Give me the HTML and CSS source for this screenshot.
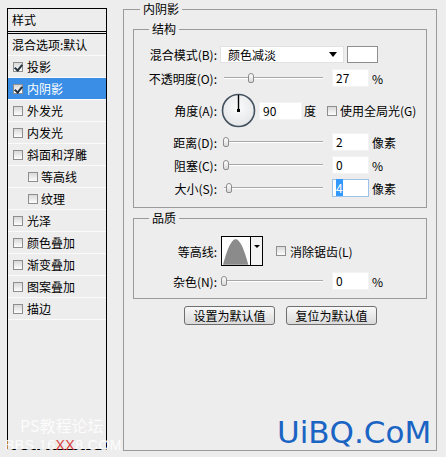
FILE: index.html
```html
<!DOCTYPE html>
<html lang="zh-CN">
<head>
    <meta charset="UTF-8">
    <meta name="viewport" content="width=device-width, initial-scale=1.0">
    <title>图层样式 - 内阴影</title>
    <link rel="stylesheet" href="styles.css">
</head>
<body>
    <div class="dialog">
        <div class="styles-list">
            <div class="list-head">样式</div>
            <div class="list-item plain">混合选项:默认</div>
            <div class="list-item"><span class="check on"></span>投影</div>
            <div class="list-item active"><span class="check on"></span>内阴影</div>
            <div class="list-item"><span class="check"></span>外发光</div>
            <div class="list-item"><span class="check"></span>内发光</div>
            <div class="list-item"><span class="check"></span>斜面和浮雕</div>
            <div class="list-item sub"><span class="check"></span>等高线</div>
            <div class="list-item sub"><span class="check"></span>纹理</div>
            <div class="list-item"><span class="check"></span>光泽</div>
            <div class="list-item"><span class="check"></span>颜色叠加</div>
            <div class="list-item"><span class="check"></span>渐变叠加</div>
            <div class="list-item"><span class="check"></span>图案叠加</div>
            <div class="list-item"><span class="check"></span>描边</div>
        </div>

        <div class="group outer">
            <div class="group-title">内阴影</div>

            <div class="group inner structure">
                <div class="group-title sub-title">结构</div>
                <div class="row row-blend">
                    <span class="label">混合模式(B):</span>
                    <div class="select"><span>颜色减淡</span><span class="arrow"></span></div>
                    <div class="swatch"></div>
                </div>
                <div class="row row-first">
                    <span class="label">不透明度(O):</span>
                    <div class="slider"><span class="thumb" style="left: 24px"></span></div>
                    <div class="field">27</div>
                    <span class="unit">%</span>
                </div>
                <div class="row row-angle">
                    <span class="label">角度(A):</span>
                    <svg class="dial" width="35" height="35" viewBox="0 0 35 35">
                        <defs>
                            <radialGradient id="dialFill" cx="50%" cy="40%" r="60%">
                                <stop offset="0" stop-color="#fbfbfb"/>
                                <stop offset="1" stop-color="#e4e6e8"/>
                            </radialGradient>
                        </defs>
                        <circle cx="17.5" cy="17.5" r="16" fill="url(#dialFill)" stroke="#44515e" stroke-width="1.6"/>
                        <line x1="17.5" y1="17.5" x2="17.5" y2="2" stroke="#000" stroke-width="1.4"/>
                        <rect x="16" y="16" width="3" height="3" fill="#000"/>
                    </svg>
                    <div class="field wide">90</div>
                    <span class="unit">度</span>
                    <span class="check global"></span>
                    <span>使用全局光(G)</span>
                </div>
                <div class="row">
                    <span class="label">距离(D):</span>
                    <div class="slider"><span class="thumb" style="left: -1px"></span></div>
                    <div class="field">2</div>
                    <span class="unit">像素</span>
                </div>
                <div class="row">
                    <span class="label">阻塞(C):</span>
                    <div class="slider"><span class="thumb" style="left: -1px"></span></div>
                    <div class="field">0</div>
                    <span class="unit">%</span>
                </div>
                <div class="row">
                    <span class="label">大小(S):</span>
                    <div class="slider"><span class="thumb" style="left: 2px"></span></div>
                    <div class="field focus"><span class="sel">4</span></div>
                    <span class="unit">像素</span>
                </div>
            </div>

            <div class="group inner quality">
                <div class="group-title sub-title">品质</div>
                <div class="row row-contour">
                    <span class="label">等高线:</span>
                    <div class="contour">
                        <svg width="29" height="28" viewBox="0 0 29 28">
                            <path d="M1 28 C6 10 10 2 14 2 C18 2 22 10 27 28 Z" fill="#8b8b8b"/>
                        </svg>
                        <span class="contour-drop"><span class="arrow small"></span></span>
                    </div>
                    <span class="check smooth"></span>
                    <span>消除锯齿(L)</span>
                </div>
                <div class="row row-noise">
                    <span class="label">杂色(N):</span>
                    <div class="slider"><span class="thumb" style="left: -3px"></span></div>
                    <div class="field">0</div>
                    <span class="unit">%</span>
                </div>
            </div>

            <div class="buttons">
                <button class="btn">设置为默认值</button>
                <button class="btn">复位为默认值</button>
            </div>
        </div>

        <div class="watermark">PS教程论坛</div>
        <div class="watermark-url">BBS.16<span class="red">XX</span>8.COM</div>
        <div class="logo">UiBQ.CoM</div>
    </div>
</body>
</html>
```

FILE: styles.css
```css
body {
    margin: 0;
    background-color: #ededed;
    font-family: "Noto Sans CJK SC", "Liberation Sans", sans-serif;
    font-size: 12px;
    color: #000;
}
.dialog {
    position: relative;
    display: flex;
    align-items: flex-start;
    width: 446px;
    height: 457px;
    overflow: hidden;
}

/* left list */
.styles-list {
    margin: 8px 0 0 7px;
    width: 100px;
    height: 442px;
    box-sizing: border-box;
    border: 1px solid #000;
    flex: none;
}
.list-head {
    height: 22px;
    line-height: 22px;
    padding-left: 4px;
    border-bottom: 3px double #000;
}
.list-item {
    display: flex;
    align-items: center;
    height: 21px;
    padding-left: 5px;
    border-bottom: 1px solid #fbfbfb;
    white-space: nowrap;
}
.list-item.plain {
    padding-left: 4px;
}
.list-item.sub {
    padding-left: 20px;
}
.list-item.active {
    background-color: #3a8ee6;
    color: #fff;
}
.check {
    position: relative;
    width: 10px;
    height: 10px;
    box-sizing: border-box;
    border: 1px solid #8e8e8e;
    background: linear-gradient(#d9d9d9, #fdfdfd);
    margin-right: 4px;
    flex: none;
}
.list-item.sub .check {
    margin-right: 3px;
}
.check.on::after {
    content: '';
    position: absolute;
    left: 2px;
    top: 0;
    width: 3px;
    height: 6px;
    border: solid #24313e;
    border-width: 0 2px 2px 0;
    transform: rotate(40deg);
}

/* group boxes */
.group {
    border: 1px solid #9b9b9b;
}
.outer {
    margin: 9px 0 0 16px;
    width: 314px;
    height: 442px;
    box-sizing: border-box;
    flex: none;
}
.group-title {
    width: fit-content;
    line-height: 16px;
    margin: -9px 0 0 16px;
    padding: 0 3px;
    background-color: #ededed;
}
.sub-title {
    margin-left: 15px;
}
.inner {
    margin: 12px 9px 0;
}
.structure {
    padding-bottom: 10px;
}
.quality {
    margin-top: 10px;
    padding-bottom: 8px;
}

/* rows */
.row {
    display: flex;
    align-items: center;
    height: 18px;
    margin-top: 5px;
    white-space: nowrap;
}
.row-blend {
    height: 17px;
    margin-top: 9px;
}
.row-first {
    margin-top: 6px;
}
.row-angle {
    height: 35px;
    margin-top: 6px;
}
.row-contour {
    height: 30px;
    margin-top: 10px;
}
.row-noise {
    margin-top: 6px;
}
.label {
    width: 83px;
    text-align: right;
    flex: none;
}
.select {
    display: flex;
    justify-content: space-between;
    align-items: center;
    margin-left: 3px;
    width: 124px;
    height: 17px;
    box-sizing: border-box;
    padding: 0 6px 0 7px;
    background-color: #fff;
    border: 1px solid #e2e2e2;
}
.arrow {
    width: 0;
    height: 0;
    border-left: 4px solid transparent;
    border-right: 4px solid transparent;
    border-top: 5px solid #000;
}
.arrow.small {
    border-left-width: 3px;
    border-right-width: 3px;
    border-top-width: 3px;
}
.swatch {
    margin-left: 3px;
    width: 31px;
    height: 17px;
    box-sizing: border-box;
    background-color: #fff;
    border: 1px solid #8f8f8f;
}
.slider {
    position: relative;
    margin-left: 7px;
    width: 99px;
    height: 18px;
    flex: none;
}
.slider::before {
    content: '';
    position: absolute;
    left: 0;
    right: 0;
    top: 8px;
    height: 1px;
    background-color: #a8a8a8;
    box-shadow: 0 1px 0 #fff;
}
.thumb {
    position: absolute;
    top: 4px;
    width: 6px;
    height: 10px;
    box-sizing: border-box;
    border: 1px solid #8c8c8c;
    border-radius: 3px 3px 2px 2px;
    background: linear-gradient(#ffffff, #d8d8d8);
}
.field {
    margin-left: 9px;
    width: 37px;
    height: 18px;
    box-sizing: border-box;
    padding-left: 3px;
    line-height: 16px;
    background-color: #fff;
    border: 1px solid #f3f3f3;
    flex: none;
}
.field.wide {
    margin-left: 3px;
    width: 43px;
}
.field.focus {
    border-color: #9cc2ea;
}
.sel {
    background-color: #3399ff;
    color: #fff;
}
.unit {
    margin-left: 3px;
}
.row-angle .unit {
    margin-left: 2px;
}
.dial {
    margin-left: 4px;
    flex: none;
}
.check.global {
    margin-left: 11px;
    margin-right: 3px;
}
.contour {
    display: flex;
    margin-left: 4px;
    width: 42px;
    height: 30px;
    box-sizing: border-box;
    border: 1px solid #000;
    background-color: #fff;
}
.contour svg {
    display: block;
}
.contour-drop {
    display: flex;
    justify-content: center;
    padding-top: 8px;
    width: 11px;
    border-left: 1px solid #000;
    background-color: #f2f2f2;
}
.check.smooth {
    margin-left: 13px;
}

/* buttons */
.buttons {
    display: flex;
    gap: 11px;
    margin-top: 7px;
    padding-left: 60px;
}
.btn {
    width: 91px;
    height: 19px;
    padding: 0;
    font: inherit;
    line-height: 17px;
    color: #000;
    border: 1px solid #6f6f6f;
    border-radius: 3px;
    background: linear-gradient(#f8f8f8, #dadada);
}

/* watermarks */
.watermark {
    position: absolute;
    left: 20px;
    top: 416px;
    font-size: 16px;
    line-height: 18px;
    color: rgba(255, 255, 255, 0.85);
}
.watermark-url {
    position: absolute;
    left: 5px;
    top: 438px;
    font-family: "Liberation Sans", sans-serif;
    font-size: 14px;
    line-height: 14px;
    letter-spacing: 0.5px;
    color: rgba(255, 255, 255, 0.9);
}
.red {
    color: #d9413e;
}
.logo {
    position: absolute;
    left: 277px;
    top: 414px;
    font-family: "DejaVu Sans", sans-serif;
    font-size: 31px;
    line-height: 36px;
    color: #1a64c4;
}
```
